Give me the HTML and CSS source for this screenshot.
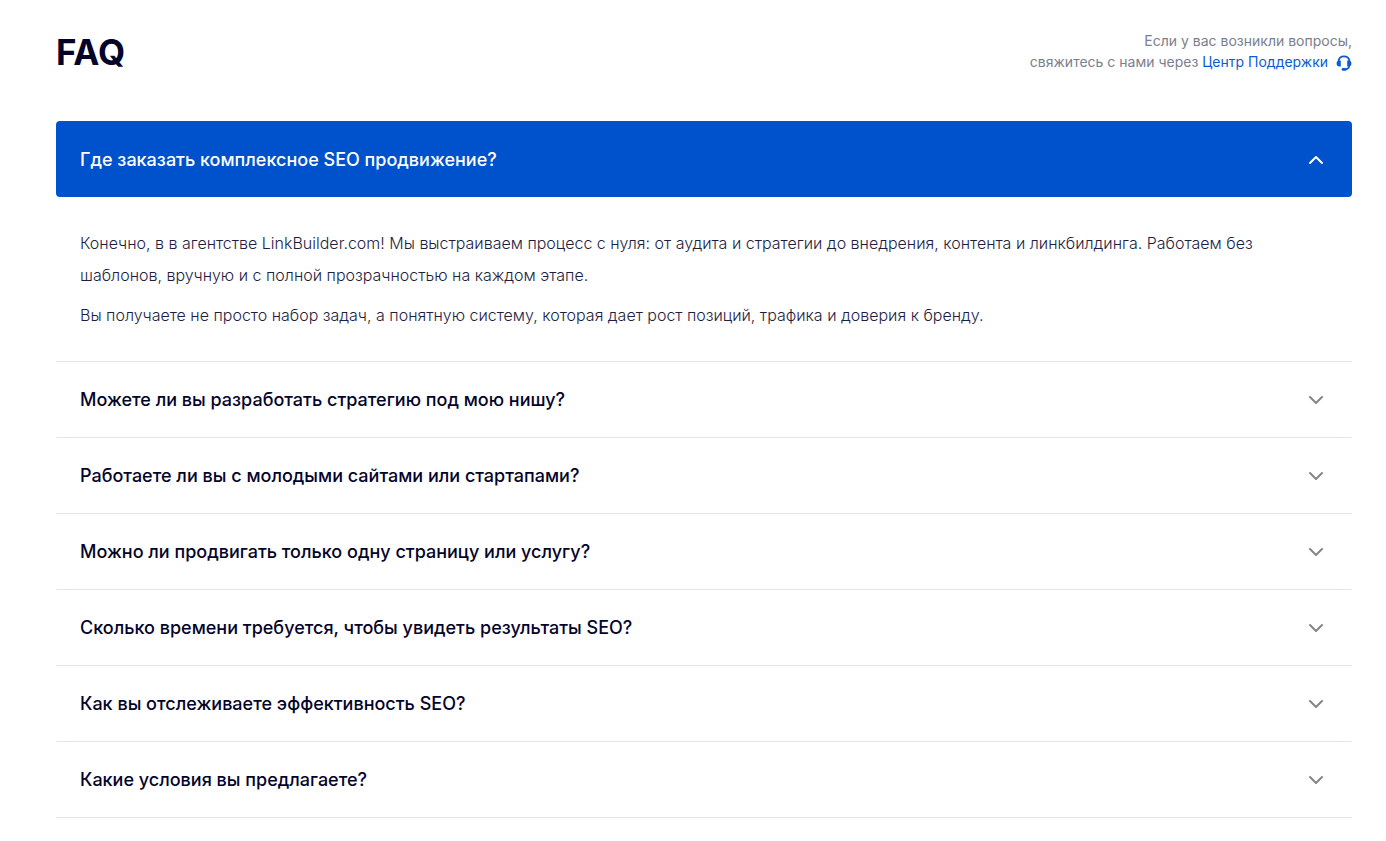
FILE: index.html
```
<!DOCTYPE html>
<html lang="ru">
<head>
<meta charset="utf-8">
<meta name="viewport" content="width=device-width, initial-scale=1">
<title>FAQ</title>
<link rel="stylesheet" href="styles.css">
</head>
<body>

<section class="faq">
    <header class="faq-header">
        <h2 class="faq-title">FAQ</h2>
        <p class="faq-contact">
            Если у вас возникли вопросы,<br>
            свяжитесь с нами через <a href="#">Центр Поддержки
            <svg class="icon-support" viewBox="0 0 16 16" aria-hidden="true">
                <path d="M2.4 6.5C2.8 3.4 5 1.4 8 1.4s5.2 2 5.6 5.1M13.4 10.5c-.2 2.3-1.7 3.6-3.9 3.8" fill="none" stroke="currentColor" stroke-width="1.8"/>
                <path d="M4.8 5.5v6H3.6a3 3 0 0 1 0-6zM11.2 5.5v6h1.2a3 3 0 0 0 0-6z" fill="currentColor"/>
                <rect x="5.6" y="13" width="5" height="2.8" rx="1.4" fill="currentColor"/>
            </svg></a>
        </p>
    </header>

    <div class="faq-list">
        <div class="faq-item open">
            <button type="button" class="faq-question" aria-expanded="true" aria-controls="answer-1">
                <span>Где заказать комплексное SEO продвижение?</span>
                <svg class="icon-arrow" viewBox="0 0 16 16" aria-hidden="true"><path d="M2 5l6 6 6-6"/></svg>
            </button>
            <div class="faq-answer" id="answer-1">
                <p>Конечно, в в агентстве LinkBuilder.com! Мы выстраиваем процесс с нуля: от аудита и стратегии до внедрения, контента и линкбилдинга. Работаем без шаблонов, вручную и с полной прозрачностью на каждом этапе.</p>
                <p>Вы получаете не просто набор задач, а понятную систему, которая дает рост позиций, трафика и доверия к бренду.</p>
            </div>
        </div>
        <div class="faq-item">
            <button type="button" class="faq-question" aria-expanded="false">
                <span>Можете ли вы разработать стратегию под мою нишу?</span>
                <svg class="icon-arrow" viewBox="0 0 16 16" aria-hidden="true"><path d="M2 5l6 6 6-6"/></svg>
            </button>
        </div>
        <div class="faq-item">
            <button type="button" class="faq-question" aria-expanded="false">
                <span>Работаете ли вы с молодыми сайтами или стартапами?</span>
                <svg class="icon-arrow" viewBox="0 0 16 16" aria-hidden="true"><path d="M2 5l6 6 6-6"/></svg>
            </button>
        </div>
        <div class="faq-item">
            <button type="button" class="faq-question" aria-expanded="false">
                <span>Можно ли продвигать только одну страницу или услугу?</span>
                <svg class="icon-arrow" viewBox="0 0 16 16" aria-hidden="true"><path d="M2 5l6 6 6-6"/></svg>
            </button>
        </div>
        <div class="faq-item">
            <button type="button" class="faq-question" aria-expanded="false">
                <span>Сколько времени требуется, чтобы увидеть результаты SEO?</span>
                <svg class="icon-arrow" viewBox="0 0 16 16" aria-hidden="true"><path d="M2 5l6 6 6-6"/></svg>
            </button>
        </div>
        <div class="faq-item">
            <button type="button" class="faq-question" aria-expanded="false">
                <span>Как вы отслеживаете эффективность SEO?</span>
                <svg class="icon-arrow" viewBox="0 0 16 16" aria-hidden="true"><path d="M2 5l6 6 6-6"/></svg>
            </button>
        </div>
        <div class="faq-item">
            <button type="button" class="faq-question" aria-expanded="false">
                <span>Какие условия вы предлагаете?</span>
                <svg class="icon-arrow" viewBox="0 0 16 16" aria-hidden="true"><path d="M2 5l6 6 6-6"/></svg>
            </button>
        </div>
    </div>
</section>

</body>
</html>
```
FILE: styles.css
```
* {box-sizing:border-box;}
body {margin:0; background:#fff; color:#04042b; font-family:Inter, "Noto Sans", sans-serif;}

.faq {padding:28px 34px 23px 56px;}
.faq-header {display:flex; justify-content:space-between; align-items:flex-start; margin-bottom:45px;}
.faq-title {margin:0; font-size:35px; line-height:48px; font-weight:700;}
.faq-contact {margin:2px 0 0; color:#7b808e; font-size:14px; line-height:21px; text-align:right;}
.faq-contact a {color:#0c5bd3; text-decoration:none;}
.icon-support {width:16px; height:16px; margin-left:4px; vertical-align:middle;}

/* accordion */
.faq-item {border-bottom:1px solid #e2e8f3;}
.faq-question {display:flex; justify-content:space-between; align-items:center; width:100%; padding:24px 28px 23px 24px; border:none; background:none; color:inherit; font:500 18px/28px Inter, "Noto Sans", sans-serif; text-align:left; cursor:pointer;}
.icon-arrow {width:16px; height:16px; flex:none; fill:none; stroke:#858585; stroke-width:2; stroke-linecap:round; stroke-linejoin:round;}
.open .faq-question {padding-top:25px; border-radius:4px; background:#0052cc; color:#fff;}
.open .icon-arrow {stroke:#fff; transform:rotate(180deg);}
.faq-answer {padding:30px 24px 22px; color:#1e1e42; font-size:16px; line-height:32px; font-weight:300;}
.faq-answer p {margin:0 0 8px;}
```
